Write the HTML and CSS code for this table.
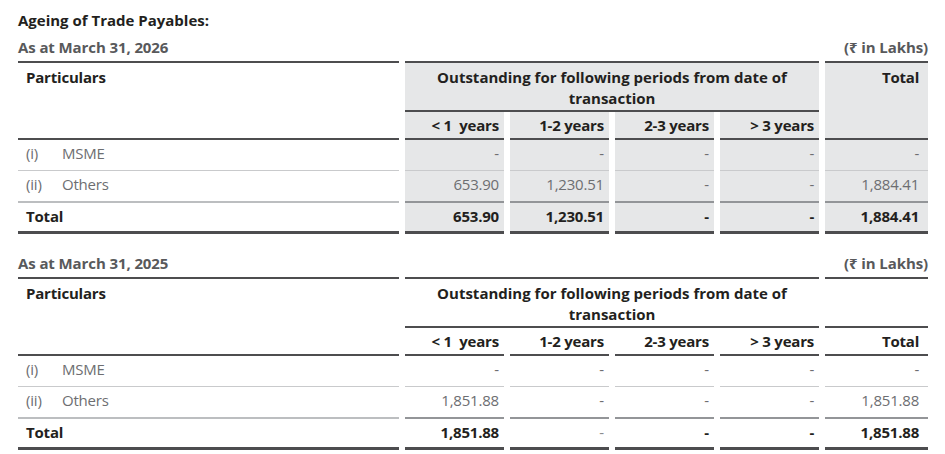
FILE: index.html
```html
<!DOCTYPE html>
<html lang="en">
<head>
<meta charset="utf-8">
<title>Ageing of Trade Payables</title>
<link rel="stylesheet" href="styles.css">
</head>
<body>
<div class="page">
  <h2 class="title">Ageing of Trade Payables:</h2>

  <section class="block">
    <div class="caption"><span class="asat">As at March 31, 2026</span><span class="unit">(₹ in Lakhs)</span></div>
    <table class="ageing shaded">
      <colgroup>
        <col class="c-part"><col class="c-num"><col class="c-num"><col class="c-num"><col class="c-num"><col class="c-tot">
      </colgroup>
      <thead>
        <tr class="h1">
          <th class="part" rowspan="2">Particulars</th>
          <th class="group num" colspan="4">Outstanding for following periods from date of transaction</th>
          <th class="tot num" rowspan="2">Total</th>
        </tr>
        <tr class="h2">
          <th class="num">&lt; 1&nbsp; years</th>
          <th class="num">1-2 years</th>
          <th class="num">2-3 years</th>
          <th class="num">&gt; 3 years</th>
        </tr>
      </thead>
      <tbody>
        <tr class="r1">
          <td class="part"><span class="idx">(i)</span>MSME</td>
          <td class="num">-</td><td class="num">-</td><td class="num">-</td><td class="num">-</td><td class="num tot">-</td>
        </tr>
        <tr class="r2">
          <td class="part"><span class="idx">(ii)</span>Others</td>
          <td class="num">653.90</td><td class="num">1,230.51</td><td class="num">-</td><td class="num">-</td><td class="num tot">1,884.41</td>
        </tr>
        <tr class="rt">
          <td class="part">Total</td>
          <td class="num">653.90</td><td class="num">1,230.51</td><td class="num">-</td><td class="num">-</td><td class="num tot">1,884.41</td>
        </tr>
      </tbody>
    </table>
  </section>

  <section class="block second">
    <div class="caption"><span class="asat">As at March 31, 2025</span><span class="unit">(₹ in Lakhs)</span></div>
    <table class="ageing">
      <colgroup>
        <col class="c-part"><col class="c-num"><col class="c-num"><col class="c-num"><col class="c-num"><col class="c-tot">
      </colgroup>
      <thead>
        <tr class="h1">
          <th class="part" rowspan="2">Particulars</th>
          <th class="group num" colspan="4">Outstanding for following periods from date of transaction</th>
          <th class="tot num blank"></th>
        </tr>
        <tr class="h2">
          <th class="num">&lt; 1&nbsp; years</th>
          <th class="num">1-2 years</th>
          <th class="num">2-3 years</th>
          <th class="num">&gt; 3 years</th>
          <th class="num tot">Total</th>
        </tr>
      </thead>
      <tbody>
        <tr class="r1">
          <td class="part"><span class="idx">(i)</span>MSME</td>
          <td class="num">-</td><td class="num">-</td><td class="num">-</td><td class="num">-</td><td class="num tot">-</td>
        </tr>
        <tr class="r2">
          <td class="part"><span class="idx">(ii)</span>Others</td>
          <td class="num">1,851.88</td><td class="num">-</td><td class="num">-</td><td class="num">-</td><td class="num tot">1,851.88</td>
        </tr>
        <tr class="rt">
          <td class="part">Total</td>
          <td class="num">1,851.88</td><td class="num light">-</td><td class="num">-</td><td class="num">-</td><td class="num tot">1,851.88</td>
        </tr>
      </tbody>
    </table>
  </section>
</div>
</body>
</html>
```

FILE: styles.css
```css
html, body {
  margin: 0;
  padding: 0;
  background: #ffffff;
}

body {
  font-family: "Open Sans", "Noto Sans", "DejaVu Sans", sans-serif;
  font-size: 15px;
  line-height: 21px;
  color: #231f20;
}

.page {
  padding: 10px 17px 0 18px;
  width: 910px;
}

.title {
  margin: 0 0 6px;
  font-size: 15px;
  line-height: 21px;
  font-weight: 700;
  color: #231f20;
}

.caption {
  display: flex;
  justify-content: space-between;
  align-items: flex-start;
  height: 21px;
  padding-bottom: 3px;
  font-weight: 700;
  letter-spacing: -0.1px;
}

.asat {
  color: #58595b;
}

.unit {
  color: #58595b;
}

.second {
  margin-top: 19px;
}

.ageing {
  border-collapse: separate;
  border-spacing: 6px 0;
  margin-left: -6px;
  width: calc(100% + 12px);
  table-layout: fixed;
  letter-spacing: -0.2px;
}

.c-part { width: 381px; }
.c-num { width: 99px; }
.c-tot { width: 103px; }

.ageing th,
.ageing td {
  padding: 0 5px 0 8px;
  text-align: left;
  vertical-align: top;
}

.ageing .num {
  text-align: right;
}

.ageing .tot {
  padding-right: 9px;
}

.ageing thead th {
  font-weight: 700;
  color: #231f20;
}

.ageing .h1 th {
  border-top: 2px solid #4d4d4f;
  padding-top: 4px;
  padding-bottom: 1px;
}

.ageing .h1 .group {
  text-align: center;
  padding-left: 20px;
  padding-right: 20px;
  letter-spacing: 0;
  border-bottom: 2px solid #4d4d4f;
}

.ageing .h1 .part,
.ageing .h1 .tot[rowspan],
.ageing .h1 .blank {
  border-bottom: 2px solid #4d4d4f;
}

.ageing .h2 th {
  padding-top: 3px;
  padding-bottom: 2px;
  border-bottom: 2px solid #4d4d4f;
}

.ageing tbody td {
  color: #6d6e71;
  padding-top: 3px;
  padding-bottom: 6px;
}

.ageing .r1 td {
  border-bottom: 1px solid #c9cacc;
}

.ageing .r2 td {
  border-bottom: 2px solid #939598;
}

.ageing .r2 td.part {
  border-bottom-color: #bcbec0;
}

.ageing .rt td {
  font-weight: 700;
  color: #231f20;
  padding-bottom: 4px;
  border-bottom: 3px solid #4d4d4f;
}

.ageing .rt td.light {
  font-weight: 400;
  color: #8a8c8e;
}

.ageing .idx {
  display: inline-block;
  width: 36px;
}

.shaded .num {
  background: #e6e7e8;
}
```
